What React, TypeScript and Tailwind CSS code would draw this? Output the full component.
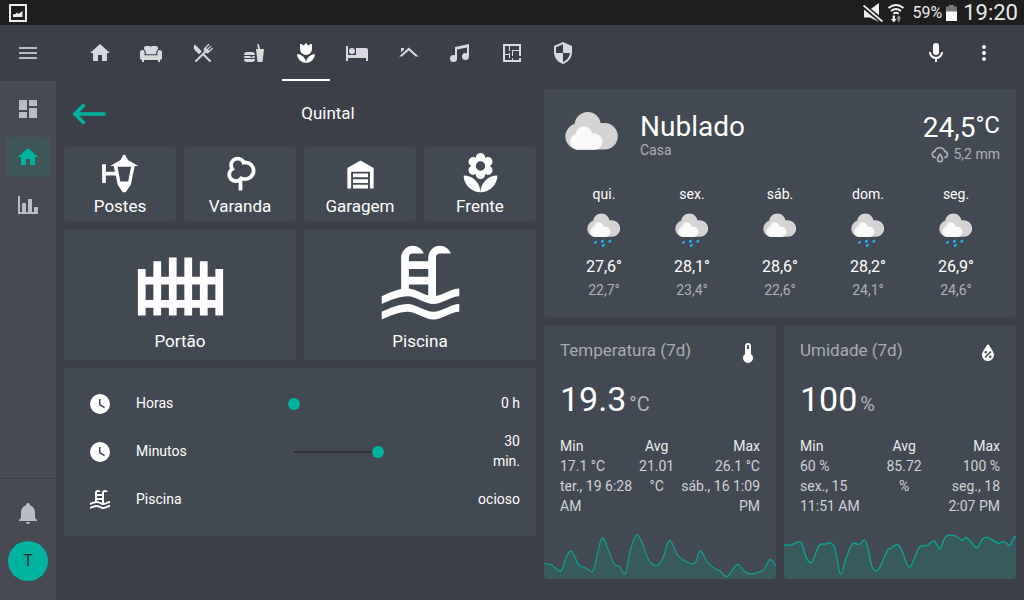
import { useState } from "react";

const icons = {
  menu: "M3,6H21V8H3V6M3,11H21V13H3V11M3,16H21V18H3V16Z",
  home: "M10,20V14H14V20H19V12H22L12,3L2,12H5V20H10Z",
  sofa: "M7 5H10.5Q11.5 5 12 6Q12.5 5 13.5 5H17A2 2 0 0 1 19 7V8.2A4 4 0 0 0 17.2 11.5V13.2H6.8V11.5A4 4 0 0 0 5 8.2V7A2 2 0 0 1 7 5ZM1 11.3A2.3 2.3 0 0 1 5.6 11.3V14.2H18.4V11.3A2.3 2.3 0 0 1 23 11.3V17A2 2 0 0 1 21 19V21H19V19H5V21H3V19A2 2 0 0 1 1 17Z",
  silverware:
    "M8.1,13.34L3.91,9.16C2.35,7.59 2.35,5.06 3.91,3.5L10.93,10.5L8.1,13.34M13.41,13L20.29,19.88L18.88,21.29L12,14.41L5.12,21.29L3.71,19.88L13.36,10.22L13.16,10C12.38,9.23 12.38,7.97 13.16,7.19L17.5,2.82L18.43,3.74L15.19,7L16.15,7.94L19.39,4.69L20.31,5.61L17.06,8.85L18,9.81L21.26,6.56L22.18,7.5L17.81,11.84C17.03,12.62 15.77,12.62 15,11.84L14.79,11.64L13.41,13Z",
  food: "M15.5,21L14,8H16.23L15.1,3.46L16.84,3L18.09,8H22L20.5,21H15.5M5,11H10A3,3 0 0,1 13,14H2A3,3 0 0,1 5,11M13,18A3,3 0 0,1 10,21H5A3,3 0 0,1 2,18H13M3,15H8L9.5,16.5L11,15H12A1,1 0 0,1 13,16A1,1 0 0,1 12,17H3A1,1 0 0,1 2,16A1,1 0 0,1 3,15Z",
  tulip:
    "M3,13A9,9 0 0,0 12,22A9,9 0 0,0 3,13M12,22A9,9 0 0,0 21,13A9,9 0 0,0 12,22M18,3V8A6,6 0 0,1 12,14A6,6 0 0,1 6,8V3C6.74,3 7.47,3.12 8.16,3.39C8.71,3.62 9.2,3.96 9.61,4.39L12,2L14.39,4.39C14.8,3.96 15.29,3.62 15.84,3.39C16.53,3.12 17.26,3 18,3Z",
  bed: "M21,7H11V14H3V5H1V20H3V17H21V20H23V9A2,2 0 0,0 21,7M7,13A3,3 0 0,0 10,10A3,3 0 0,0 7,7A3,3 0 0,0 4,10A3,3 0 0,0 7,13Z",
  roof: "M4 7H7V8.6L4 11.4ZM11.8 6.6L21.6 15.6H18.7L11.8 9.4L4.9 15.6H2.2Z",
  music:
    "M21,3V15.5A3.5,3.5 0 0,1 17.5,19A3.5,3.5 0 0,1 14,15.5A3.5,3.5 0 0,1 17.5,12C18.04,12 18.55,12.12 19,12.34V6.47L9,8.6V17.5A3.5,3.5 0 0,1 5.5,21A3.5,3.5 0 0,1 2,17.5A3.5,3.5 0 0,1 5.5,14C6.04,14 6.55,14.12 7,14.34V6L21,3Z",
  floorPlan:
    "M10 5V10H9V5H5V13H9V12H10V17H9V14H5V19H12V17H13V19H19V17H21V21H3V3H21V15H19V10H13V15H12V9H19V5H10Z",
  shield:
    "M12,12H19C18.47,16.11 15.72,19.78 12,20.92V12H5V6.3L12,3.19M12,1L3,5V11C3,16.55 6.84,21.73 12,23C17.16,21.73 21,16.55 21,11V5L12,1Z",
  mic: "M12,2A3,3 0 0,1 15,5V11A3,3 0 0,1 12,14A3,3 0 0,1 9,11V5A3,3 0 0,1 12,2M19,11C19,14.53 16.39,17.44 13,17.93V21H11V17.93C7.61,17.44 5,14.53 5,11H7A5,5 0 0,0 12,16A5,5 0 0,0 17,11H19Z",
  dots: "M12,16A2,2 0 0,1 14,18A2,2 0 0,1 12,20A2,2 0 0,1 10,18A2,2 0 0,1 12,16M12,10A2,2 0 0,1 14,12A2,2 0 0,1 12,14A2,2 0 0,1 10,12A2,2 0 0,1 12,10M12,4A2,2 0 0,1 14,6A2,2 0 0,1 12,8A2,2 0 0,1 10,6A2,2 0 0,1 12,4Z",
  dashboard: "M13,3V9H21V3M13,21H21V11H13M3,21H11V15H3M3,13H11V3H3V13Z",
  chart: "M22,21H2V3H4V19H6V10H10V19H12V6H16V19H18V14H22V21Z",
  bell: "M21,19V20H3V19L5,17V11C5,7.9 7.03,5.17 10,4.29C10,4.19 10,4.1 10,4A2,2 0 0,1 12,2A2,2 0 0,1 14,4C14,4.1 14,4.19 14,4.29C16.97,5.17 19,7.9 19,11V17L21,19M14,21A2,2 0 0,1 12,23A2,2 0 0,1 10,21",
  lamp: "M2.2 7H4.2V11H9L8.4 8H6.5L12 4.8L13 3Q13 2 14 2T15 3L16 4.8L21.5 8H19.6L17.5 18L14.8 22H13.2L10.5 18L9.5 13H4.2V17H2.2ZM10.4 8.4L11.9 16.3H16.1L17.6 8.4Z",
  tree: "M11 21V16.74C10.53 16.91 10.03 17 9.5 17C7 17 5 15 5 12.5C5 11.23 5.5 10.09 6.36 9.27C6.13 8.73 6 8.13 6 7.5C6 5 8 3 10.5 3C12.06 3 13.44 3.8 14.25 5C14.33 5 14.41 5 14.5 5A5.5 5.5 0 0 1 20 10.5A5.5 5.5 0 0 1 14.5 16C14 16 13.5 15.93 13 15.79V21H11M10.5 5A2.5 2.5 0 0 0 8 7.5C8 8.5 8.4 9.3 9.2 10C7.9 10.2 7 11.3 7 12.5A2.5 2.5 0 0 0 9.5 15C10.7 15 11.5 14.4 12 13.3C12.8 13.8 13.6 14 14.5 14A3.5 3.5 0 0 0 14.5 7C13.9 7 13.4 7.1 13 7.4C12.9 5.9 11.8 5 10.5 5Z",
  garage:
    "M19,20H17V11H7V20H5V9L12,5L19,9V20M8,12H16V14H8V12M8,15H16V17H8V15M16,18V20H8V18H16Z",
  flower:
    "M3,13A9,9 0 0,0 12,22C12,17 7.97,13 3,13M12,5.5A2.5,2.5 0 0,1 14.5,8A2.5,2.5 0 0,1 12,10.5A2.5,2.5 0 0,1 9.5,8A2.5,2.5 0 0,1 12,5.5M5.6,10.25A2.5,2.5 0 0,0 8.1,12.75C8.63,12.75 9.12,12.58 9.5,12.31C9.5,12.37 9.5,12.43 9.5,12.5A2.5,2.5 0 0,0 12,15A2.5,2.5 0 0,0 14.5,12.5C14.5,12.43 14.5,12.37 14.5,12.31C14.88,12.58 15.37,12.75 15.9,12.75C17.28,12.75 18.4,11.63 18.4,10.25C18.4,9.25 17.81,8.4 16.97,8C17.81,7.6 18.4,6.74 18.4,5.75C18.4,4.37 17.28,3.25 15.9,3.25C15.37,3.25 14.88,3.41 14.5,3.69C14.5,3.63 14.5,3.56 14.5,3.5A2.5,2.5 0 0,0 12,1A2.5,2.5 0 0,0 9.5,3.5C9.5,3.56 9.5,3.63 9.5,3.69C9.12,3.41 8.63,3.25 8.1,3.25A2.5,2.5 0 0,0 5.6,5.75C5.6,6.74 6.19,7.6 7.03,8C6.19,8.4 5.6,9.25 5.6,10.25M12,22A9,9 0 0,0 21,13C16,13 12,17 12,22Z",
  gate: "M1 8H3V10H5V6H7V10H9V5H11V10H13V5H15V10H17V6H19V10H21V8H23V20H21V18H19V20H17V18H15V20H13V18H11V20H9V18H7V20H5V18H3V20H1ZM3 12V16H5V12ZM7 12V16H9V12ZM11 12V16H13V12ZM15 12V16H17V12ZM19 12V16H21V12Z",
  pool: "M2,15C3.67,14.25 5.33,13.5 7,13.17V5A3,3 0 0,1 10,2C11.31,2 12.42,2.83 12.83,4H10A1,1 0 0,0 9,5V6H14V5A3,3 0 0,1 17,2C18.31,2 19.42,2.83 19.83,4H17A1,1 0 0,0 16,5V14.94C18,14.62 20,13 22,13V15C19.78,15 17.56,17 15.33,17C13.11,17 10.89,15 8.67,15C6.44,15 4.22,16 2,17V15M14,8H9V10H14V8M14,12H9V13C10.67,13.16 12.33,14.31 14,14.79V12M2,19C4.22,18 6.44,17 8.67,17C10.89,17 13.11,19 15.33,19C17.56,19 19.78,17 22,17V19C19.78,19 17.56,21 15.33,21C13.11,21 10.89,19 8.67,19C6.44,19 4.22,20 2,21V19Z",
  clock:
    "M12,2A10,10 0 0,0 2,12A10,10 0 0,0 12,22A10,10 0 0,0 22,12A10,10 0 0,0 12,2M16.2,16.2L11,13V7H12.5V12.2L17,14.9L16.2,16.2Z",
  thermometer:
    "M15 13V5A3 3 0 0 0 9 5V13A5 5 0 1 0 15 13M12 4A1 1 0 0 1 13 5V8H11V5A1 1 0 0 1 12 4Z",
  waterPercent:
    "M12,3.25C12,3.25 6,10 6,14C6,17.32 8.69,20 12,20A6,6 0 0,0 18,14C18,10 12,3.25 12,3.25M14.47,9.97L15.53,11.03L9.53,17.03L8.47,15.97M9.75,10A1.25,1.25 0 0,1 11,11.25A1.25,1.25 0 0,1 9.75,12.5A1.25,1.25 0 0,1 8.5,11.25A1.25,1.25 0 0,1 9.75,10M14.25,14.5A1.25,1.25 0 0,1 15.5,15.75A1.25,1.25 0 0,1 14.25,17A1.25,1.25 0 0,1 13,15.75A1.25,1.25 0 0,1 14.25,14.5Z",
};

type IconName = keyof typeof icons;

function Icon({ name, className = "size-6" }: { name: IconName; className?: string }) {
  return (
    <svg viewBox="0 0 24 24" fill="currentColor" fillRule="evenodd" aria-hidden="true" className={`shrink-0 ${className}`}>
      <path d={icons[name]} />
    </svg>
  );
}

function StatusBar() {
  return (
    <div className="flex h-[25px] items-center bg-[#1e1e1e] pr-[6px] pl-[9px] text-[#e8e8e8]">
      <svg viewBox="0 0 18 18" className="size-[18px]" aria-hidden="true">
        <rect x="1" y="1" width="16" height="16" fill="none" stroke="#eee" strokeWidth="2" />
        <path d="M4 13V10.5L6.5 10L8 8.5L9.5 10L13.5 7V13Z" fill="#eee" />
      </svg>
      <div className="ml-auto flex items-center">
        <svg viewBox="0 0 20 20" className="h-5 w-5" aria-hidden="true">
          <path d="M1 6.5H7L16 0V19L7 14.5H1Z" fill="#eee" />
          <path d="M0 2.5L19 18" stroke="#1e1e1e" strokeWidth="5" />
          <path d="M0.5 2.5L19.5 18.5" stroke="#eee" strokeWidth="1.8" />
        </svg>
        <svg viewBox="0 0 18 20" className="ml-1 h-5 w-[18px]" fill="none" aria-hidden="true">
          <path d="M1.5 5Q9 -1 16.5 5M4 8Q9 3.8 14 8M6.3 10.8Q9 8.6 11.7 10.8" stroke="#eee" strokeWidth="1.9" />
          <path d="M5.6 12.5H8V16H9.6L6.8 19.5L4 16H5.6Z" fill="#eee" />
          <path d="M10.6 18.5V15.5H9.2L11.8 12.2L14.4 15.5H13V18.5Z" fill="#8a8a8a" />
        </svg>
        <span className="ml-2 text-base leading-6">59%</span>
        <svg viewBox="0 0 11 16" className="ml-1 h-4 w-[11px]" aria-hidden="true">
          <path d="M3 0H8V1.5H11V7H0V1.5H3Z" fill="#777" />
          <rect y="6.5" width="11" height="9.5" fill="#fff" />
        </svg>
        <span className="ml-[6px] text-[22px] leading-6">19:20</span>
      </div>
    </div>
  );
}

const tabs: { icon: IconName; label: string }[] = [
  { icon: "home", label: "Casa" },
  { icon: "sofa", label: "Sala" },
  { icon: "silverware", label: "Jantar" },
  { icon: "food", label: "Cozinha" },
  { icon: "tulip", label: "Quintal" },
  { icon: "bed", label: "Quarto" },
  { icon: "roof", label: "Telhado" },
  { icon: "music", label: "Música" },
  { icon: "floorPlan", label: "Planta" },
  { icon: "shield", label: "Segurança" },
];

function AppBar() {
  const [active, setActive] = useState(4);
  return (
    <header className="flex h-14 items-center pr-4">
      <button aria-label="Menu" className="flex h-14 w-14 shrink-0 items-center justify-center text-[#b9bcc6]">
        <Icon name="menu" />
      </button>
      <nav className="ml-5 flex h-14 max-w-[511px] flex-1 justify-between">
        {tabs.map((t, i) => (
          <button
            key={t.icon}
            aria-label={t.label}
            onClick={() => setActive(i)}
            className={`flex w-12 items-center justify-center border-y-2 border-t-transparent ${
              i === active ? "border-b-white text-white" : "border-b-transparent text-[#d8d9db]"
            }`}
          >
            <Icon name={t.icon} />
          </button>
        ))}
      </nav>
      <div className="ml-auto flex text-white">
        <button aria-label="Voz" className="flex size-12 items-center justify-center">
          <Icon name="mic" />
        </button>
        <button aria-label="Opções" className="flex size-12 items-center justify-center">
          <Icon name="dots" />
        </button>
      </div>
    </header>
  );
}

function Sidebar() {
  return (
    <aside className="flex w-14 shrink-0 flex-col bg-[#474a53] text-[#b9bcc6]">
      <nav className="flex flex-col items-center gap-2 pt-2">
        <a href="#painel" aria-label="Painel" className="flex h-10 w-11 items-center justify-center rounded">
          <Icon name="dashboard" />
        </a>
        <a href="#casa" aria-label="Casa" className="flex h-10 w-11 items-center justify-center rounded bg-[#3f5658] text-[#00b39e]">
          <Icon name="home" />
        </a>
        <a href="#historico" aria-label="Histórico" className="flex h-10 w-11 items-center justify-center rounded">
          <Icon name="chart" />
        </a>
      </nav>
      <div className="mt-auto flex flex-col items-center gap-2 border-t border-[#3b3e46] pt-[14px] pb-[19px]">
        <button aria-label="Notificações" className="flex h-10 w-11 items-center justify-center">
          <Icon name="bell" />
        </button>
        <button aria-label="Perfil" className="flex size-10 items-center justify-center rounded-full bg-[#00b39e] text-base text-[#20262b]">
          T
        </button>
      </div>
    </aside>
  );
}

const smallButtons: { icon: IconName; label: string }[] = [
  { icon: "lamp", label: "Postes" },
  { icon: "tree", label: "Varanda" },
  { icon: "garage", label: "Garagem" },
  { icon: "flower", label: "Frente" },
];

const largeButtons: { icon: IconName; label: string }[] = [
  { icon: "gate", label: "Portão" },
  { icon: "pool", label: "Piscina" },
];

function SliderRow({ id, label, initial, unit }: { id: string; label: string; initial: number; unit: string }) {
  const [value, setValue] = useState(initial);
  return (
    <div className="flex h-10 items-center">
      <span className="mr-4 flex w-10 justify-center">
        <Icon name="clock" />
      </span>
      <label htmlFor={id} className="flex-1 pb-0.5">
        {label}
      </label>
      <input
        id={id}
        type="range"
        min={0}
        max={60}
        value={value}
        onChange={(e) => setValue(Number(e.target.value))}
        className="h-3 w-[180px] appearance-none bg-transparent [&::-webkit-slider-thumb]:size-3 [&::-webkit-slider-thumb]:appearance-none [&::-webkit-slider-thumb]:rounded-full [&::-webkit-slider-thumb]:bg-[#00b39e]"
        style={{
          backgroundImage: "linear-gradient(#313334, #313334)",
          backgroundRepeat: "no-repeat",
          backgroundPosition: "6px center",
          backgroundSize: `calc((100% - 12px) * ${value / 60}) 2px`,
        }}
      />
      <span className="w-[52px] pb-0.5 pl-3 text-right">
        {value} {unit}
      </span>
    </div>
  );
}

function LeftColumn() {
  return (
    <section className="flex flex-col gap-2">
      <div className="grid h-[50px] grid-cols-[56px_1fr] items-center">
        <button aria-label="Voltar" className="pl-2 text-[#00b39e]">
          <svg viewBox="0 0 34 22" className="h-[22px] w-[34px]" fill="none" stroke="currentColor" strokeWidth="3.6" aria-hidden="true">
            <path d="M12.5 1.5L3 11L12.5 20.5M3 11H33.5" />
          </svg>
        </button>
        <h1 className="pb-0.5 text-center text-[17px] leading-6">Quintal</h1>
      </div>
      <div className="grid grid-cols-4 gap-2">
        {smallButtons.map((b) => (
          <button key={b.label} className="flex flex-col items-center rounded bg-[#434952] pt-1 pb-[5px] text-[17px] leading-5">
            <Icon name={b.icon} className="size-[45px]" />
            {b.label}
          </button>
        ))}
      </div>
      <div className="grid grid-cols-2 gap-2">
        {largeButtons.map((b) => (
          <button key={b.label} className="flex flex-col items-center rounded bg-[#434952] py-[9px] text-[17px] leading-5">
            <Icon name={b.icon} className="size-[93px]" />
            {b.label}
          </button>
        ))}
      </div>
      <div className="flex flex-col gap-2 rounded bg-[#434952] p-4 text-sm">
        <SliderRow id="horas" label="Horas" initial={0} unit="h" />
        <SliderRow id="minutos" label="Minutos" initial={30} unit="min." />
        <div className="flex h-10 items-center">
          <span className="mr-4 flex w-10 justify-center">
            <Icon name="pool" />
          </span>
          <span className="flex-1 pb-0.5">Piscina</span>
          <span className="pb-0.5">ocioso</span>
        </div>
      </div>
    </section>
  );
}

function CloudIcon({ rain = false, className }: { rain?: boolean; className: string }) {
  const drop =
    "c-0.224 0.248-0.571 0.299-0.775 0.114-0.204-0.185-0.187-0.535 0.037-0.783 0.148-0.163 0.591-0.329 0.876-0.424 0.125-0.041 0.227 0.052 0.198 0.18-0.066 0.292-0.187 0.75-0.335 0.913";
  return (
    <svg viewBox="0 0 17 17" aria-hidden="true" className={className}>
      <path
        fill="#d4d4d4"
        d="m3.8863 5.035c-0.54892 0.16898-1.04 0.46637-1.4372 0.8636-0.63077 0.63041-1.0206 1.4933-1.0206 2.455 0 1.9251 1.5589 3.4682 3.4837 3.4682h6.9688c1.9251 0 3.484-1.5981 3.484-3.5232 0-1.9251-1.5589-3.5232-3.484-3.5232h-1.0834c-0.25294-1.6916-1.6986-2.9083-3.4463-2.9083-1.7995 0-3.2805 1.4153-3.465 3.1679"
      />
      <path
        fill="#f9f9f9"
        d="m4.1996 7.6995c-0.33902 0.10407-0.64276 0.28787-0.88794 0.5334-0.39017 0.38982-0.63147 0.92322-0.63147 1.5176 0 1.1896 0.96414 2.1431 2.1537 2.1431h4.3071c1.1896 0 2.153-0.98742 2.153-2.1777 0-1.1896-0.96344-2.1777-2.153-2.1777h-0.66992c-0.15593-1.0449-1.0499-1.7974-2.1297-1.7974-1.112 0-2.0274 0.87524-2.1417 1.9586"
      />
      {rain && <path fill="#30b3ff" d={`M5.2 14.6${drop}M8.1 14.1${drop}M8.5 15.9${drop}M11.3 14.1${drop}`} />}
    </svg>
  );
}

const forecast = [
  { day: "qui.", rain: true, high: "27,6°", low: "22,7°" },
  { day: "sex.", rain: true, high: "28,1°", low: "23,4°" },
  { day: "sáb.", rain: false, high: "28,6°", low: "22,6°" },
  { day: "dom.", rain: true, high: "28,2°", low: "24,1°" },
  { day: "seg.", rain: true, high: "26,9°", low: "24,6°" },
];

function WeatherCard() {
  return (
    <div className="rounded bg-[#434952] p-4">
      <div className="flex items-center">
        <CloudIcon className="mr-4 size-16" />
        <div className="flex-1 pb-1">
          <div className="text-[28px] leading-[30px]">Nublado</div>
          <div className="text-sm leading-4 text-[#adb0b8]">Casa</div>
        </div>
        <div className="flex flex-col items-end">
          <div className="flex items-start text-[28px] leading-[34px]">
            24,5<span className="text-2xl leading-7">°C</span>
          </div>
          <div className="flex items-center gap-1 text-sm leading-[18px] text-[#adb0b8]">
            <svg viewBox="0 0 18 18" className="size-[18px]" fill="none" stroke="currentColor" strokeWidth="1.6" aria-hidden="true">
              <path d="M5 12.5H4A3.2 3.2 0 0 1 3.8 6.2A5.2 5.2 0 0 1 13.7 6.4A3.1 3.1 0 0 1 14 12.5H13" />
              <path d="M9 9.3C9 9.3 6.5 12.3 6.5 14.2A2.5 2.5 0 0 0 11.5 14.2C11.5 12.3 9 9.3 9 9.3Z" />
            </svg>
            5,2 mm
          </div>
        </div>
      </div>
      <div className="mt-4 grid grid-cols-5 text-center">
        {forecast.map((f) => (
          <div key={f.day} className="flex flex-col items-center">
            <span className="text-sm leading-[18px]">{f.day}</span>
            <CloudIcon rain={f.rain} className="mt-[6px] size-10" />
            <span className="mt-[5px] text-base leading-[26px]">{f.high}</span>
            <span className="mb-px text-sm leading-5 text-[#adb0b8]">{f.low}</span>
          </div>
        ))}
      </div>
    </div>
  );
}

type Point = [number, number];

function smoothPath(points: Point[]) {
  let d = `M${points[0][0]} ${points[0][1]}`;
  for (let i = 0; i < points.length - 1; i++) {
    const p0 = points[Math.max(i - 1, 0)];
    const p1 = points[i];
    const p2 = points[i + 1];
    const p3 = points[Math.min(i + 2, points.length - 1)];
    d += `C${p1[0] + (p2[0] - p0[0]) / 6} ${p1[1] + (p2[1] - p0[1]) / 6} ${p2[0] - (p3[0] - p1[0]) / 6} ${p2[1] - (p3[1] - p1[1]) / 6} ${p2[0]} ${p2[1]}`;
  }
  return d;
}

const temperature: Point[] = [
  [0, 104], [23, 108], [50, 126], [66, 85], [83, 67], [104, 107], [123, 116], [140, 126], [151, 116], [173, 28],
  [193, 63], [210, 105], [226, 112], [244, 133], [260, 60], [277, 18], [293, 38], [313, 91], [338, 110], [356, 88],
  [377, 34], [400, 78], [428, 98], [446, 105], [456, 97], [469, 65], [488, 96], [508, 116], [528, 126], [548, 143],
  [566, 122], [581, 106], [600, 126], [616, 134], [638, 132], [660, 121], [678, 91], [696, 111],
];

const humidity: Point[] = [
  [0, 48], [18, 48], [38, 41], [50, 39], [58, 56], [68, 88], [83, 100], [93, 78], [106, 48], [123, 45],
  [138, 41], [150, 52], [158, 83], [170, 137], [186, 88], [205, 45], [226, 46], [242, 33], [252, 58], [263, 110],
  [276, 126], [290, 110], [310, 64], [323, 57], [340, 46], [354, 65], [366, 100], [377, 115], [388, 96], [406, 54],
  [428, 50], [450, 35], [460, 50], [469, 58], [486, 22], [512, 20], [535, 34], [546, 25], [566, 44], [579, 56],
  [596, 30], [610, 25], [643, 42], [660, 37], [677, 49], [688, 28], [696, 21],
];

interface SensorProps {
  name: string;
  icon: IconName;
  value: string;
  unit: string;
  min: string[];
  avg: string[];
  max: string[];
  points: Point[];
  line: number;
}

function SensorCard({ name, icon, value, unit, min, avg, max, points, line }: SensorProps) {
  const d = smoothPath(points);
  const columns = [
    { title: "Min", lines: min, align: "text-left" },
    { title: "Avg", lines: avg, align: "text-center" },
    { title: "Max", lines: max, align: "text-right" },
  ];
  return (
    <div className="overflow-hidden rounded bg-[#434952] pt-4">
      <div className="flex h-6 items-start justify-between px-4">
        <h2 className="text-[17px] leading-[18px] text-[#a9acb1]">{name}</h2>
        <Icon name={icon} />
      </div>
      <div className="mt-[14px] flex items-baseline gap-[3px] px-4 text-[34px] leading-10">
        {value}
        <span className="text-xl leading-6 text-[#b0b3b7]">{unit}</span>
      </div>
      <div className="mt-[17px] flex h-20 justify-between px-4 text-sm leading-5 text-[#d0d2d4]">
        {columns.map((c) => (
          <div key={c.title} className={c.align}>
            <div className="text-[#ebecec]">{c.title}</div>
            {c.lines.map((l) => (
              <div key={l}>{l}</div>
            ))}
          </div>
        ))}
      </div>
      <svg viewBox="0 0 696 150" preserveAspectRatio="none" className="mt-[13px] block h-[50px] w-full" aria-hidden="true">
        <path d={`${d}V150H0Z`} fill="#00b39e" fillOpacity="0.16" />
        <path d={d} fill="none" stroke="#08a695" strokeWidth={line} />
      </svg>
    </div>
  );
}

export default function App() {
  return (
    <div className="flex min-h-screen flex-col bg-[#3c3f48] font-['Roboto',sans-serif] text-white">
      <StatusBar />
      <AppBar />
      <div className="flex flex-1">
        <Sidebar />
        <main className="grid flex-1 grid-cols-2 items-start gap-2 p-2">
          <LeftColumn />
          <section className="flex flex-col gap-2">
            <WeatherCard />
            <div className="grid grid-cols-2 gap-2">
              <SensorCard
                name="Temperatura (7d)"
                icon="thermometer"
                value="19.3"
                unit="°C"
                min={["17.1 °C", "ter., 19 6:28", "AM"]}
                avg={["21.01", "°C"]}
                max={["26.1 °C", "sáb., 16 1:09", "PM"]}
                points={temperature}
                line={3.4}
              />
              <SensorCard
                name="Umidade (7d)"
                icon="waterPercent"
                value="100"
                unit="%"
                min={["60 %", "sex., 15", "11:51 AM"]}
                avg={["85.72", "%"]}
                max={["100 %", "seg., 18", "2:07 PM"]}
                points={humidity}
                line={4}
              />
            </div>
          </section>
        </main>
      </div>
    </div>
  );
}
